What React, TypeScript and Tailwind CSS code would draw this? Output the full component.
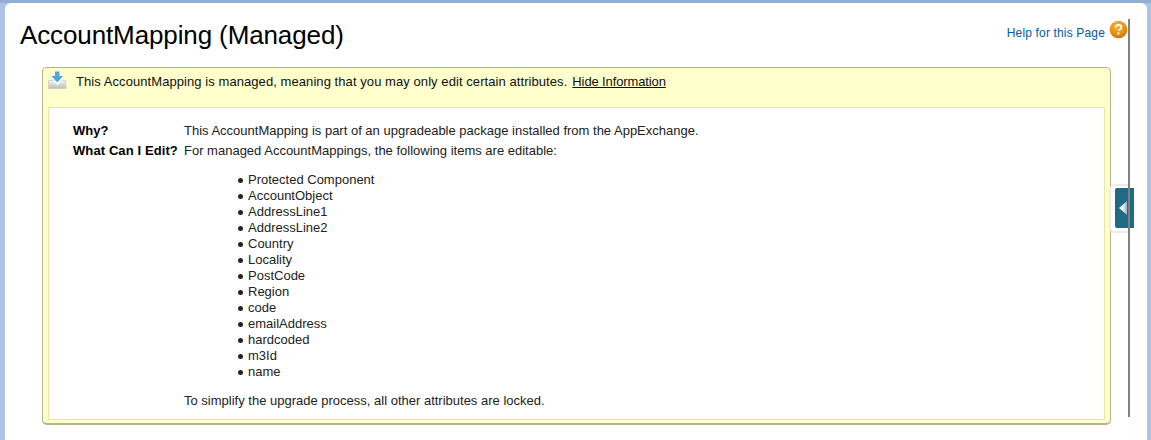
const items = ["Protected Component","AccountObject","AddressLine1","AddressLine2","Country","Locality","PostCode","Region","code","emailAddress","hardcoded","m3Id","name"];

export default function App() {
  return (
    <div className="relative h-[440px] w-[1151px] overflow-hidden bg-[#aec4e0] pl-[5px] pr-[4px] pt-[3px] font-['Liberation_Sans',Arial,sans-serif] text-[13px] text-black">
      <div className="absolute inset-x-0 top-0 h-[3px] bg-[#92aed3]" />
      <div className="relative h-[437px] rounded-t-[6px] bg-white">
        <div className="flex items-start justify-between pl-[15px] pr-[19px] pt-[16px]">
          <h1 className="text-[26px] leading-[32px] font-normal tracking-[-0.12px] text-black">AccountMapping (Managed)</h1>
          <div className="flex items-start gap-[4px] pt-[1px]">
            <span className="mt-[6px] text-[12px] leading-[14px] tracking-[0.16px] text-[#015ba7]">Help for this Page</span>
            <svg width="19" height="19" viewBox="0 0 19 19">
              <defs>
                <radialGradient id="h" cx="45%" cy="30%" r="75%">
                  <stop offset="0" stopColor="#fbb63c" />
                  <stop offset="0.7" stopColor="#e48a0c" />
                  <stop offset="1" stopColor="#b5660a" />
                </radialGradient>
              </defs>
              <circle cx="9.5" cy="9.5" r="8.8" fill="url(#h)" />
              <path d="M6.6 7.4c0-1.7 1.3-2.6 2.9-2.6s2.9.9 2.9 2.4c0 1.2-.7 1.8-1.5 2.3-.7.5-1 .8-1 1.6" fill="none" stroke="#fff" strokeWidth="1.7" />
              <rect x="8.4" y="12.4" width="2" height="2" fill="#fff" />
            </svg>
          </div>
        </div>
        <div className="ml-[37px] mr-[36px] mt-[16px] h-[358px] rounded-[5px] border border-b-2 border-[#b5b58a] bg-[#ffffcc] px-[5px]">
          <div className="flex h-[39px] items-start">
            <svg className="mt-[3px]" width="19" height="18" viewBox="0 0 19 18">
              <defs>
                <linearGradient id="t" x1="0" y1="0" x2="0" y2="1">
                  <stop offset="0" stopColor="#f2f2f2" />
                  <stop offset="1" stopColor="#bdbdbd" />
                </linearGradient>
              </defs>
              <path d="M0.5 9.5 H18 V17.5 H0.5 Z" fill="url(#t)" stroke="#c4c4c4" strokeWidth="0.6" />
              <path d="M4.5 9.5 L9.3 14 L14 9.5 Z" fill="#ffffff" />
              <path d="M7 0.5 H11.5 V5 H15 L9.3 11.5 L3.5 5 H7 Z" fill="#4fa6e0" />
            </svg>
            <p className="ml-[9px] mt-[6px] flex gap-[5px] leading-[15px] text-[#111]">
              <span className="tracking-[0.07px]">This AccountMapping is managed, meaning that you may only edit certain attributes.</span>
              <span className="tracking-[-0.12px] underline">Hide Information</span>
            </p>
          </div>
          <div className="h-[313px] border border-[#e6e6ab] bg-white pl-[24px] pt-[15px] text-[#222]">
            <div className="flex h-[20px] items-start leading-[16px]">
              <b className="w-[111px] text-black">Why?</b>
              <span>This AccountMapping is part of an upgradeable package installed from the AppExchange.</span>
            </div>
            <div className="flex items-start leading-[16px]">
              <b className="w-[111px] tracking-[0.1px] text-black">What Can I Edit?</b>
              <div>
                <p>For managed AccountMappings, the following items are editable:</p>
                <ul className="mb-[13px] ml-[54px] mt-[13px]">
                  {items.map((i) => (
                    <li key={i} className="flex items-center gap-[5px]">
                      <span className="h-[5px] w-[5px] rounded-full bg-[#222]" />
                      {i}
                    </li>
                  ))}
                </ul>
                <p>To simplify the upgrade process, all other attributes are locked.</p>
              </div>
            </div>
          </div>
        </div>
        <div className="absolute left-[1104px] top-[181px] h-[49px] w-[19px] rounded-l-[6px] border-2 border-r-0 border-[#ececec] bg-white" />
        <div className="absolute left-[1110px] top-[185px] flex h-[40px] w-[19px] items-center rounded-l-[2px] bg-[#1f6b85] pl-[4px]">
          <svg width="8" height="14" viewBox="0 0 8 14">
            <defs>
              <linearGradient id="a" x1="0" y1="0" x2="1" y2="0">
                <stop offset="0" stopColor="#ffffff" />
                <stop offset="0.6" stopColor="#d8e4e9" />
                <stop offset="1" stopColor="#8fb3c1" />
              </linearGradient>
            </defs>
            <path d="M8 0 V14 L0 7 Z" fill="url(#a)" />
          </svg>
        </div>
        <div className="absolute left-[1123px] top-[16px] h-[398px] w-[2px] bg-[#808080]" />
      </div>
    </div>
  );
}
